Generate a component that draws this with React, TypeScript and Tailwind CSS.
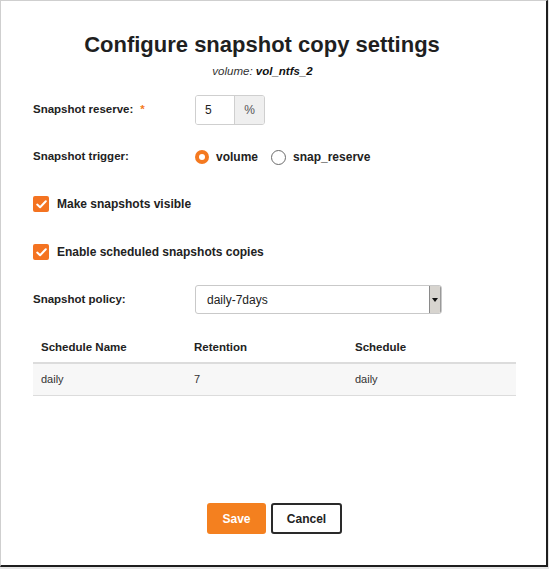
import React from "react";

const font = { fontFamily: '"Liberation Sans", Arial, sans-serif' };

function Radio({ checked, label }: { checked: boolean; label: string }) {
  return (
    <label className="flex items-center gap-[7px]">
      {checked ? (
        <span className="flex h-[14px] w-[14px] items-center justify-center rounded-full bg-[#f47920]">
          <span className="h-[6px] w-[6px] rounded-full bg-white" />
        </span>
      ) : (
        <span className="h-[15px] w-[15px] rounded-full border-[1.5px] border-[#6b6b6b] bg-white" />
      )}
      <span className="text-[12px] font-bold text-[#222]">{label}</span>
    </label>
  );
}

function Checkbox({ label }: { label: string }) {
  return (
    <label className="flex h-[20px] items-center gap-[8px]">
      <span className="flex h-[16px] w-[16px] items-center justify-center rounded-[2px] bg-[#f47321]">
        <svg width="11" height="9" viewBox="0 0 11 9" fill="none">
          <path d="M1.2 4.6 L4.1 7.3 L9.8 1.3" stroke="white" strokeWidth="2" strokeLinecap="round" strokeLinejoin="round" />
        </svg>
      </span>
      <span className="text-[12px] font-bold text-[#222]">{label}</span>
    </label>
  );
}

export default function App() {
  return (
    <div style={font} className="h-[569px] w-[549px] bg-[#e5e5e5]">
      <div className="flex h-[567px] w-[548px] flex-col border-l border-t border-[#cfcfcf] border-b-2 border-r-2 border-b-[#1e1e1e] border-r-[#1e1e1e] bg-white pl-[32px] pr-[30px] text-[#222]">
        <h1 className="pr-[25px] pt-[31px] text-center text-[22px] font-bold leading-[26px] text-[#1f1f1f]">
          Configure snapshot copy settings
        </h1>
        <p className="mt-[6px] pr-[24px] text-center text-[11.5px] italic leading-[14px] text-[#333]">
          volume: <span className="font-bold text-[#111]">vol_ntfs_2</span>
        </p>

        <div className="mt-[17px] flex h-[30px] items-center">
          <div className="w-[162px] text-[11.5px] font-bold">
            Snapshot reserve:<span className="ml-[7px] text-[#f47920]">*</span>
          </div>
          <div className="flex h-[30px] overflow-hidden rounded-[3px] border border-[#cfcfcf]">
            <div className="flex w-[38px] items-center bg-white pl-[9px] text-[12px]">5</div>
            <div className="flex w-[30px] items-center justify-center border-l border-[#cfcfcf] bg-[#efefef] text-[12px] text-[#555]">
              %
            </div>
          </div>
        </div>

        <div className="mt-[22px] flex h-[20px] items-center">
          <div className="w-[162px] text-[11.5px] font-bold">Snapshot trigger:</div>
          <div className="flex items-center gap-[13px]">
            <Radio checked label="volume" />
            <Radio checked={false} label="snap_reserve" />
          </div>
        </div>

        <div className="mt-[27px]">
          <Checkbox label="Make snapshots visible" />
        </div>
        <div className="mt-[28px]">
          <Checkbox label="Enable scheduled snapshots copies" />
        </div>

        <div className="mt-[23px] flex h-[29px] items-center">
          <div className="w-[162px] text-[11.5px] font-bold">Snapshot policy:</div>
          <div className="flex h-[29px] w-[247px] overflow-hidden rounded-[3px] border border-[#c9c9c9] bg-white">
            <div className="flex flex-1 items-center pl-[11px] text-[12px]">daily-7days</div>
            <div className="flex w-[12px] items-center justify-center border-l border-r border-l-[#8a8a8a] border-r-[#9a9a9a] bg-[#d7d4cf]">
              <svg width="6" height="4" viewBox="0 0 6 4">
                <path d="M0 0 H6 L3 4 Z" fill="#111" />
              </svg>
            </div>
          </div>
        </div>

        <div className="mt-[19px] w-[483px]">
          <div className="grid h-[31px] grid-cols-[153px_161px_1fr] items-center border-b-2 border-[#dcdcdc] pl-[8px] text-[11.5px] font-bold">
            <div>Schedule Name</div>
            <div>Retention</div>
            <div>Schedule</div>
          </div>
          <div className="grid h-[32px] grid-cols-[153px_161px_1fr] items-center border-b border-[#dcdcdc] bg-[#f7f7f7] pl-[8px] text-[11px] text-[#333]">
            <div>daily</div>
            <div>7</div>
            <div>daily</div>
          </div>
        </div>

        <div className="mb-[31px] mt-auto flex justify-center gap-[5px]">
          <button className="h-[31px] w-[59px] rounded-[3px] bg-[#f4801f] text-[12px] font-bold text-white">
            Save
          </button>
          <button className="h-[31px] w-[71px] rounded-[3px] border-2 border-[#2a2a2a] bg-white text-[12px] font-bold text-[#222]">
            Cancel
          </button>
        </div>
      </div>
    </div>
  );
}
